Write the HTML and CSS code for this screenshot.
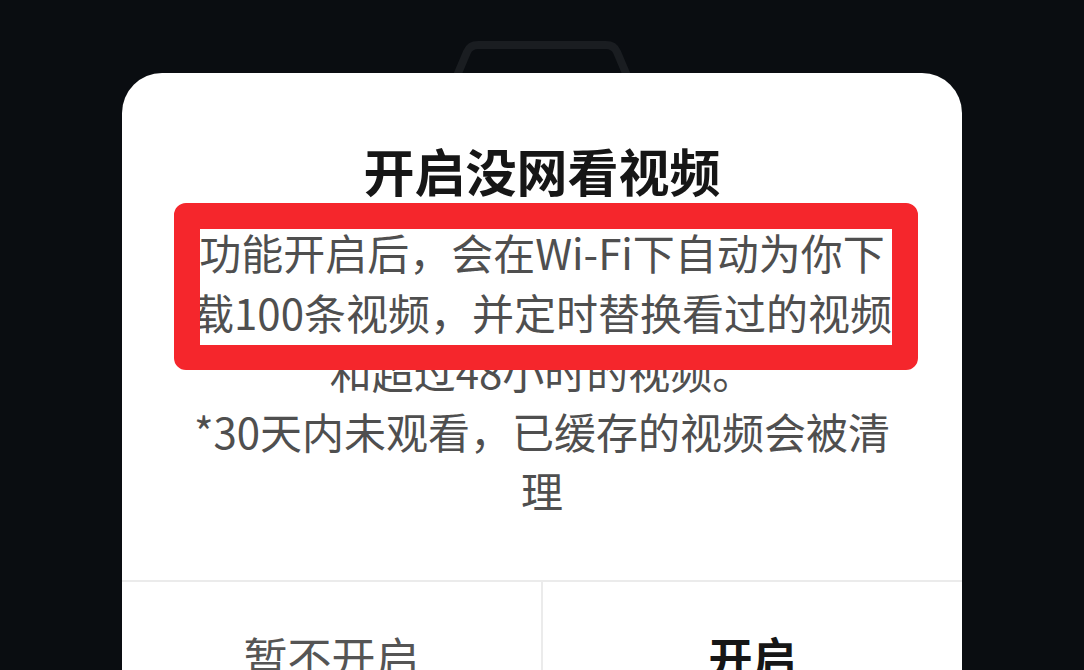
FILE: index.html
```html
<!DOCTYPE html>
<html lang="zh-CN">
<head>
<meta charset="utf-8">
<link rel="stylesheet" href="styles.css">
</head>
<body>
<div class="screen">
  <svg class="handle" width="200" height="50" viewBox="0 0 200 50">
    <path d="M14 40 L25 14 Q28 7 36 7 L164 7 Q172 7 175 14 L186 40" fill="none" stroke="#1a1d21" stroke-width="8" stroke-linejoin="round"/>
  </svg>
  <div class="dialog">
    <h1 class="title">开启没网看视频</h1>
    <p class="desc">功能开启后，会在Wi-Fi下自动为你下载100条视频，并定时替换看过的视频和超过48小时的视频。<br>*30天内未观看，已缓存的视频会被清理</p>
    <div class="actions">
      <div class="btn btn-cancel">暂不开启</div>
      <div class="btn btn-ok">开启</div>
    </div>
    <div class="highlight"></div>
  </div>
</div>
</body>
</html>
```

FILE: styles.css
```css
html, body {
  margin: 0;
  padding: 0;
  width: 1084px;
  height: 670px;
  overflow: hidden;
  background: #0a0d11;
}
.screen {
  position: relative;
  width: 1084px;
  height: 670px;
  padding-top: 73px;
  box-sizing: border-box;
  font-family: "Noto Sans CJK SC", "Noto Sans", sans-serif;
}
.handle {
  position: absolute;
  left: 442px;
  top: 38px;
}
.dialog {
  position: relative;
  margin-left: 122px;
  width: 840px;
  height: 740px;
  background: #ffffff;
  border-radius: 40px 40px 0 0;
  padding-top: 62px;
  box-sizing: border-box;
}
.title {
  margin: 0;
  text-align: center;
  font-size: 51px;
  line-height: 70px;
  font-weight: 700;
  color: #161616;
}
.desc {
  margin: 17px auto 0;
  width: 714px;
  text-align: center;
  font-size: 42px;
  line-height: 59.5px;
  color: #4f4f4f;
}
.actions {
  margin-top: 60px;
  display: flex;
  border-top: 2px solid #ebebeb;
  height: 148px;
}
.btn {
  flex: 1;
  display: flex;
  align-items: center;
  justify-content: center;
  font-size: 44px;
}
.btn-cancel {
  color: #555555;
  border-right: 2px solid #ebebeb;
}
.btn-ok {
  color: #161616;
  font-weight: 700;
}
.highlight {
  position: absolute;
  left: 52px;
  top: 130px;
  width: 744px;
  height: 167px;
  box-sizing: border-box;
  border: 26px solid #f5262c;
  border-bottom-width: 25px;
  border-radius: 12px;
}
```
